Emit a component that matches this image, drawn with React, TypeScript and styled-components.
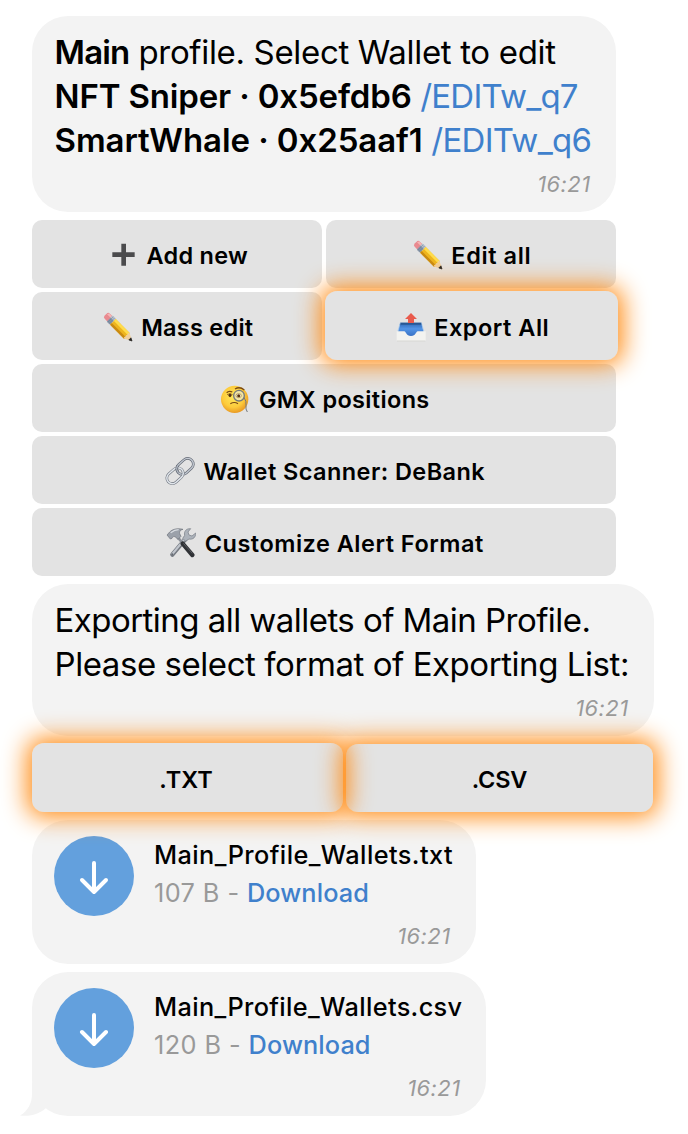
import React from 'react';
import styled, { createGlobalStyle } from 'styled-components';

const GlobalStyle = createGlobalStyle`
  * { box-sizing: border-box; }
  body {
    margin: 0;
    background: #fff;
    color: #000;
    font-family: Inter, 'Liberation Sans', sans-serif;
  }
`;

const Chat = styled.main`
  display: flex;
  flex-direction: column;
  align-items: flex-start;
  gap: 8px;
  width: 688px;
  height: 1134px;
  padding: 16px 0 0 32px;
  overflow: hidden;
`;

const Bubble = styled.article<{ $width: number }>`
  position: relative;
  width: ${(p) => p.$width}px;
  padding: 14px 25.5px 14px 22.5px;
  border-radius: 36px;
  background: #f3f3f3;
`;

const FileBubble = styled(Bubble)`
  padding: 16px 25.5px 14px 22px;
`;

const Line = styled.div`
  height: 44px;
  font-size: 33px;
  line-height: 44px;
  white-space: pre;
`;

const Text = styled.span<{ $track?: number }>`
  letter-spacing: ${(p) => p.$track ?? 0}px;
`;

const Strong = styled(Text)`
  font-weight: 600;
`;

const Command = styled(Text)`
  color: #3f80cc;
`;

const Time = styled.time<{ $gap?: number }>`
  display: block;
  height: 28px;
  margin-top: ${(p) => p.$gap ?? 8}px;
  color: #999;
  font-size: 22px;
  font-style: italic;
  line-height: 28px;
  letter-spacing: 0.4px;
  text-align: right;
`;

const Keyboard = styled.div`
  display: grid;
  grid-template-columns: 290px 290px;
  grid-auto-rows: 68px;
  gap: 4px;
`;

const Key = styled.button<{ $wide?: boolean; $track?: number }>`
  display: flex;
  align-items: center;
  justify-content: center;
  gap: 8.5px;
  grid-column: ${(p) => (p.$wide ? '1 / -1' : 'auto')};
  padding: 4px 0 0 2px;
  border: 0;
  border-radius: 10px;
  background: #e3e3e3;
  color: #000;
  font: 600 23.5px/30px Inter, 'Liberation Sans', sans-serif;
  letter-spacing: ${(p) => p.$track ?? 0}px;
  white-space: nowrap;
`;

const GlowKey = styled(Key)`
  position: relative;
  border-radius: 12px;

  &::after {
    content: '';
    position: absolute;
    inset: 0;
    z-index: 2;
    border-radius: inherit;
    box-shadow: 0 0 24px 5px rgba(255, 138, 16, 0.98);
    pointer-events: none;
  }
`;

const ExportKey = styled(GlowKey)`
  margin: -1px -2px 0 -1px;
`;

const FormatRow = styled.div`
  display: flex;
  align-items: flex-end;
  gap: 3px;
  height: 69px;
  margin-top: -1px;
`;

const FormatKey = styled(GlowKey)<{ $width: number; $height: number; $nudge?: number }>`
  width: ${(p) => p.$width}px;
  height: ${(p) => p.$height}px;
  padding: 4px ${(p) => p.$nudge ?? 0}px 0 0;
`;

const Emoji = styled.svg`
  flex: none;
  width: 30px;
  height: 30px;
  margin-top: -2px;
`;

const FileRow = styled.div`
  display: flex;
  gap: 20px;
  height: 80px;
`;

const DownloadCircle = styled.div`
  flex: none;
  width: 80px;
  height: 80px;
  border-radius: 50%;
  background: #63a0dd;
`;

const FileInfo = styled.div`
  line-height: 38px;
  font-size: 25.3px;
  white-space: pre;
`;

const FileName = styled.div<{ $track: number }>`
  height: 38px;
  font-weight: 500;
  letter-spacing: ${(p) => p.$track}px;
`;

const FileMeta = styled.div`
  height: 38px;
  color: #999;
  letter-spacing: 0.42px;
`;

const DownloadLink = styled.span`
  color: #3f80cc;
  font-weight: 500;
  letter-spacing: 0.1px;
`;

const Tail = styled.svg`
  position: absolute;
  left: -12px;
  bottom: 0;
  width: 40px;
  height: 40px;
`;

const PlusIcon = () => (
  <Emoji viewBox="0 0 90 90">
    <path d="M40 11h14v26h26v14H54v26H40V51H13V37h27z" fill="#4b4b4d" />
  </Emoji>
);

const PencilIcon = () => (
  <Emoji viewBox="0 0 90 90">
    <g transform="translate(10 10) rotate(45)">
      <rect x="-3" y="-11" width="22" height="22" rx="7" fill="#e98a90" />
      <path d="M2-10h14v6H-1z" fill="#f6b5b5" />
      <rect x="14" y="-12" width="14" height="24" fill="#8494a8" />
      <path d="M14-12h14v8H14z" fill="#b9c5d2" />
      <path d="M18-12v24M23-12v24" stroke="#66768b" strokeWidth="1.5" />
      <path d="M28-12h60v24H28z" fill="#eeb51e" />
      <path d="M28-12h60v8H28z" fill="#ffdc4c" />
      <path d="M28 5h60v7H28z" fill="#c98a12" />
      <path d="M86-12l23 12-23 12q-4-5 0-8-4-4 0-8-4-4 0-8z" fill="#f1d09c" />
      <path d="M100-4.500l9 4.500-9 4.500z" fill="#222" stroke="#222" strokeWidth="2" />
    </g>
  </Emoji>
);

const OutboxIcon = () => (
  <Emoji viewBox="0 0 90 90">
    <defs>
      <linearGradient id="tray" x1="0" y1="0" x2="0" y2="1">
        <stop offset="0" stopColor="#2c66b3" />
        <stop offset="0.4" stopColor="#5294e6" />
        <stop offset="1" stopColor="#3268bb" />
      </linearGradient>
    </defs>
    <path d="M13 32h63l7 28v18H6V60z" fill="url(#tray)" />
    <path d="M13 32h63l2 6H11z" fill="#285894" />
    <path d="M13 32L5 60M76 32l8 28" stroke="#9fc5ef" strokeWidth="2" />
    <path d="M2 58h23c5 0 5 14 20 14s15-14 20-14h24v27q0 3-3 3H5q-3 0-3-3z" fill="#f3f3f0" />
    <path d="M3 87h85" stroke="#c9c9c6" strokeWidth="2" />
    <path d="M45 3l18 18H54v12H36V21H27z" fill="#e95b4d" />
  </Emoji>
);

const MonocleIcon = () => (
  <Emoji viewBox="0 0 90 90">
    <defs>
      <radialGradient id="face" cx="0.45" cy="0.4" r="0.6">
        <stop offset="0" stopColor="#ffe95c" />
        <stop offset="0.65" stopColor="#fdcb3c" />
        <stop offset="1" stopColor="#e99a24" />
      </radialGradient>
    </defs>
    <circle cx="44" cy="46" r="41" fill="url(#face)" />
    <path d="M20 26q7-7 17-2M45 15q14-9 28 3" fill="none" stroke="#7a4a14" strokeWidth="4" />
    <ellipse cx="30" cy="34" rx="4.500" ry="5.500" fill="#54300d" />
    <path d="M21 32q9-6 17 0" fill="none" stroke="#7a4a14" strokeWidth="2" />
    <circle cx="57" cy="35" r="16" fill="#f1e5a2" stroke="#74787c" strokeWidth="4" />
    <ellipse cx="56" cy="35" rx="8" ry="6" fill="#fffbea" stroke="#9b7740" strokeWidth="2" />
    <circle cx="56" cy="35" r="4.500" fill="#54300d" />
    <path d="M72 40q8 12 6 24t4 20" fill="none" stroke="#74787c" strokeWidth="3" />
    <path d="M31 59q12-7 23 0" fill="none" stroke="#7a4a14" strokeWidth="3.500" />
  </Emoji>
);

const ChainIcon = () => (
  <Emoji viewBox="0 0 90 90">
    <g fill="none" transform="translate(45 45) rotate(-42)">
      <rect x="-7" y="-17" width="55" height="34" rx="17" stroke="#626873" strokeWidth="8" />
      <rect x="-7" y="-17" width="55" height="34" rx="17" stroke="#c3c9d2" strokeWidth="4" />
      <rect x="-48" y="-16" width="55" height="33" rx="16.500" stroke="#6e747e" strokeWidth="8" />
      <rect x="-48" y="-16" width="55" height="33" rx="16.500" stroke="#e1e6ec" strokeWidth="4.500" />
      <path d="M-7 0a17 17 0 0 1 15-17" stroke="#626873" strokeWidth="8" />
      <path d="M-7 0a17 17 0 0 1 15-17" stroke="#b5bcc6" strokeWidth="4" />
    </g>
  </Emoji>
);

const ToolsIcon = () => (
  <Emoji viewBox="0 0 90 90">
    <path d="M60 31L19 80" stroke="#747981" strokeWidth="13" strokeLinecap="round" />
    <path d="M59 30L19 78" stroke="#c0c5cc" strokeWidth="6" strokeLinecap="round" />
    <path
      d="M74 2c-13-1-21 8-18 20l-6 9 9 9 10-7c12 3 21-6 20-18l-11 9-9-3-3-9z"
      fill="#adb3bb"
      stroke="#737982"
      strokeWidth="2"
    />
    <circle cx="19" cy="79" r="3" fill="#666b73" />
    <path d="M35 28l18 20" stroke="#8d929a" strokeWidth="8" />
    <path d="M50 47l29 34" stroke="#303236" strokeWidth="13" strokeLinecap="round" />
    <path d="M53 47l25 28" stroke="#5b5d62" strokeWidth="3" strokeLinecap="round" />
    <path
      d="M3 21l8-9C20 3 34 0 51 4c-8 2-12 6-10 13l4 8-9 9-9-8c-5-1-7 0-9 5l-5 2z"
      fill="#9ba1aa"
      stroke="#6c717a"
      strokeWidth="2"
    />
    <path d="M14 14q12-9 24-9" fill="none" stroke="#d8dce1" strokeWidth="4" />
  </Emoji>
);

const DownArrow = () => (
  <DownloadCircle>
    <svg width="80" height="80" viewBox="0 0 80 80" fill="none">
      <path
        d="M40 27v29M28 44l12 12 12-12"
        stroke="#fff"
        strokeWidth="4"
        strokeLinecap="round"
        strokeLinejoin="round"
      />
    </svg>
  </DownloadCircle>
);

interface FileMessageProps {
  name: string;
  size: string;
  width: number;
  track: number;
  last?: boolean;
}

const FileMessage = ({ name, size, width, track, last }: FileMessageProps) => (
  <FileBubble $width={width}>
    {last && (
      <Tail viewBox="0 0 40 40">
        <path d="M12 6V18C12 27 8 35 0 39.500C11 41 21 37 26 32L34 24Z" fill="#f3f3f3" />
      </Tail>
    )}
    <FileRow>
      <DownArrow />
      <FileInfo>
        <FileName $track={track}>{name}</FileName>
        <FileMeta>
          {size} - <DownloadLink>Download</DownloadLink>
        </FileMeta>
      </FileInfo>
    </FileRow>
    <Time $gap={6}>16:21</Time>
  </FileBubble>
);

export default function App() {
  return (
    <>
      <GlobalStyle />
      <Chat>
        <Bubble $width={584}>
          <Line>
            <Strong $track={-0.8}>Main</Strong>
            <Text $track={-0.33}> profile. Select Wallet to edit</Text>
          </Line>
          <Line>
            <Strong $track={-0.15}>NFT Sniper · 0x5efdb6</Strong>
            <Command $track={-0.78}> /EDITw_q7</Command>
          </Line>
          <Line>
            <Strong $track={-0.08}>SmartWhale · 0x25aaf1</Strong>
            <Command $track={-0.72}> /EDITw_q6</Command>
          </Line>
          <Time>16:21</Time>
        </Bubble>

        <Keyboard>
          <Key $track={0.25}><PlusIcon />Add new</Key>
          <Key $track={0.6}><PencilIcon />Edit all</Key>
          <Key $track={0.25}><PencilIcon />Mass edit</Key>
          <ExportKey $track={0.5}><OutboxIcon />Export All</ExportKey>
          <Key $wide $track={0.35}><MonocleIcon />GMX positions</Key>
          <Key $wide $track={0.43}><ChainIcon />Wallet Scanner: DeBank</Key>
          <Key $wide $track={0.5}><ToolsIcon />Customize Alert Format</Key>
        </Keyboard>

        <Bubble $width={622}>
          <Line><Text $track={-0.54}>Exporting all wallets of Main Profile.</Text></Line>
          <Line><Text $track={-0.44}>Please select format of Exporting List:</Text></Line>
          <Time>16:21</Time>
        </Bubble>

        <FormatRow>
          <FormatKey $width={311} $height={69} $nudge={3}>.TXT</FormatKey>
          <FormatKey $width={307} $height={68} $track={-0.2}>.CSV</FormatKey>
        </FormatRow>

        <FileMessage name="Main_Profile_Wallets.txt" size="107 B" width={444} track={0.42} />
        <FileMessage name="Main_Profile_Wallets.csv" size="120 B" width={454} track={0.36} last />
      </Chat>
    </>
  );
}
